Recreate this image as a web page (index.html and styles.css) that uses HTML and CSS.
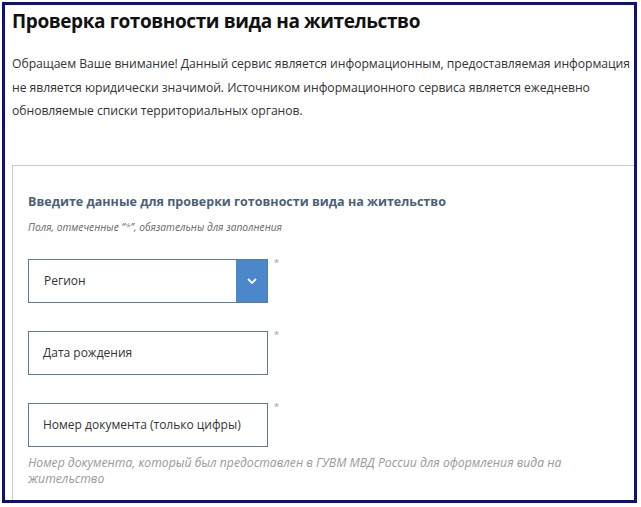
FILE: index.html
```html
<!DOCTYPE html>
<html lang="ru">
<head>
    <meta charset="UTF-8">
    <meta name="viewport" content="width=device-width, initial-scale=1.0">
    <title>Проверка готовности вида на жительство</title>
    <link rel="stylesheet" href="styles.css">
</head>
<body>
    <div class="frame">
        <h1 class="title">Проверка готовности вида на жительство</h1>
        <p class="notice">Обращаем Ваше внимание! Данный сервис является информационным, предоставляемая информация<br>
            не является юридически значимой. Источником информационного сервиса является ежедневно<br>
            обновляемые списки территориальных органов.</p>

        <div class="form-box">
            <h3 class="form-title">Введите данные для проверки готовности вида на жительство</h3>
            <p class="form-note">Поля, отмеченные “<span class="star">*</span>”, обязательны для заполнения</p>

            <div class="field">
                <div class="select">
                    <span class="select-text">Регион</span>
                    <span class="select-btn">
                        <svg width="10" height="6" viewBox="0 0 10 6">
                            <path d="M1 1 L5 5 L9 1" fill="none" stroke="#fff" stroke-width="1.8"/>
                        </svg>
                    </span>
                </div>
                <span class="req">*</span>
            </div>

            <div class="field">
                <div class="input">Дата рождения</div>
                <span class="req">*</span>
            </div>

            <div class="field field-last">
                <div class="input">Номер документа (только цифры)</div>
                <span class="req">*</span>
            </div>
            <p class="hint">Номер документа, который был предоставлен в ГУВМ МВД России для оформления вида на жительство</p>
        </div>
    </div>
</body>
</html>
```

FILE: styles.css
```css
body {
    margin: 0;
    background: #fff;
    font-family: "Open Sans", Arial, sans-serif;
    color: #222;
}
.frame {
    margin: 2px 4px 0 2px;
    height: 495px;
    border: 3px solid #10107c;
    overflow: hidden;
    padding-left: 7px;
}
.title {
    margin: 2px 0 0;
    font-size: 19px;
    font-weight: 700;
    letter-spacing: -0.4px;
    line-height: 28px;
    color: #111;
}
.notice {
    margin: 17px 0 0;
    font-size: 12.2px;
    letter-spacing: -0.05px;
    line-height: 23.5px;
    color: #333;
}
.form-box {
    margin-top: 42px;
    border-top: 1px solid #ccc;
    border-left: 1px solid #ccc;
    padding: 25px 0 0 15px;
    height: 400px;
}
.form-title {
    margin: 0;
    font-size: 12.5px;
    font-weight: 700;
    line-height: 22px;
    color: #4b5f77;
}
.form-note {
    margin: 7px 0 0;
    font-size: 10.2px;
    font-style: italic;
    color: #666;
    line-height: 14px;
}
.star {
    color: #999;
}
.field {
    display: flex;
    align-items: flex-start;
    margin-top: 25px;
}
.field + .field {
    margin-top: 28px;
}
.select, .input {
    width: 238px;
    height: 42px;
    border: 1px solid #5c7b97;
    display: flex;
    align-items: center;
    font-size: 12px;
    color: #333;
}
.select-text {
    flex: 1;
    padding-left: 15px;
}
.select-btn {
    width: 31px;
    height: 100%;
    background: #4a87cb;
    display: flex;
    align-items: center;
    justify-content: center;
}
.input {
    padding-left: 14px;
    width: 224px;
}
.req {
    margin-left: 6px;
    font-size: 9px;
    line-height: 8px;
    color: #999;
}
.hint {
    margin: 8px 0 0;
    font-size: 12.2px;
    font-style: italic;
    line-height: 16px;
    color: #999;
    width: 560px;
}
```
